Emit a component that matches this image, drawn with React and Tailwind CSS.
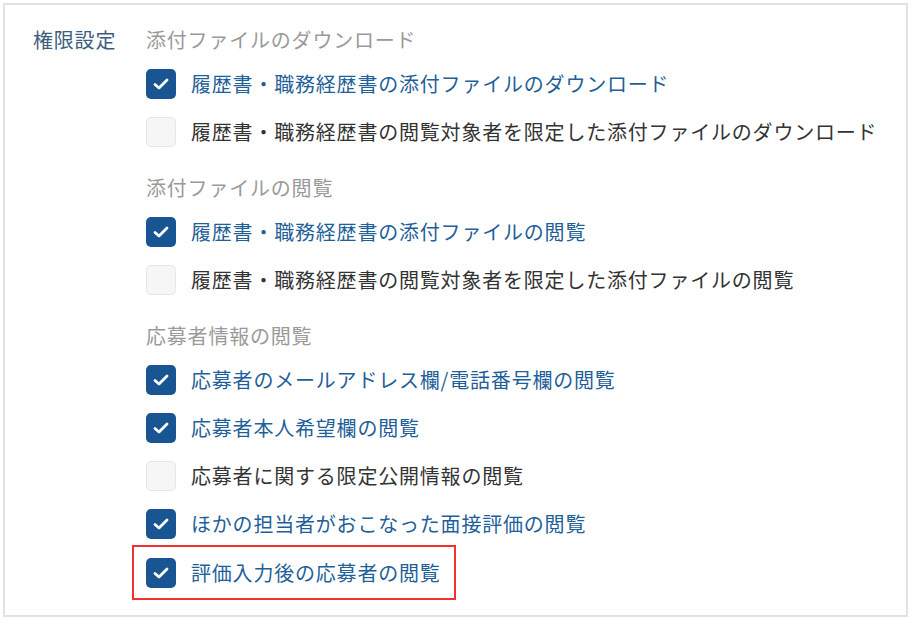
const groups = [
  {
    title: "添付ファイルのダウンロード",
    items: [
      { label: "履歴書・職務経歴書の添付ファイルのダウンロード", checked: true },
      { label: "履歴書・職務経歴書の閲覧対象者を限定した添付ファイルのダウンロード", checked: false },
    ],
  },
  {
    title: "添付ファイルの閲覧",
    items: [
      { label: "履歴書・職務経歴書の添付ファイルの閲覧", checked: true },
      { label: "履歴書・職務経歴書の閲覧対象者を限定した添付ファイルの閲覧", checked: false },
    ],
  },
  {
    title: "応募者情報の閲覧",
    items: [
      { label: "応募者のメールアドレス欄/電話番号欄の閲覧", checked: true },
      { label: "応募者本人希望欄の閲覧", checked: true },
      { label: "応募者に関する限定公開情報の閲覧", checked: false },
      { label: "ほかの担当者がおこなった面接評価の閲覧", checked: true },
      { label: "評価入力後の応募者の閲覧", checked: true, highlight: true },
    ],
  },
];

function Checkbox({ checked }) {
  if (!checked) {
    return (
      <span className="h-[30px] w-[30px] shrink-0 rounded-[5px] border border-[#e6e6e6] bg-[#f6f6f6]" />
    );
  }
  return (
    <span className="flex h-[30px] w-[30px] shrink-0 items-center justify-center rounded-[5px] bg-[#185592]">
      <svg width="16" height="12" viewBox="0 0 16 12" fill="none">
        <path
          d="M2 6.5 L6 10 L14 2"
          stroke="white"
          strokeWidth="2.8"
          strokeLinecap="round"
          strokeLinejoin="round"
        />
      </svg>
    </span>
  );
}

function Row({ item }) {
  const row = (
    <div className="flex h-[48px] items-center gap-[15px]">
      <Checkbox checked={item.checked} />
      <span className={item.checked ? "text-[#1f5f9a]" : "text-[#333333]"}>{item.label}</span>
    </div>
  );

  if (item.highlight) {
    return (
      <div className="-my-[3px] -ml-[14px] inline-flex h-[55px] items-center self-start border-2 border-[#f23030] pl-[12px] pr-[13px]">
        {row}
      </div>
    );
  }
  return row;
}

export default function App() {
  return (
    <div
      className="ml-[3px] mt-[3px] h-[614px] w-[905px] border-2 border-[#e2e2e2] bg-white pl-[28px] pt-[21px] text-[20px] leading-[28px] tracking-[0.8px]"
      style={{ fontFamily: '"Noto Sans CJK JP", "Noto Sans", sans-serif' }}
    >
      <div className="flex">
        <div className="w-[113px] shrink-0 text-[#3d5d7c]">権限設定</div>
        <div className="flex flex-col">
          {groups.map((group, i) => (
            <div key={group.title} className={i === 0 ? "flex flex-col" : "mt-[18px] flex flex-col"}>
              <div className="mb-[6px] text-[#9a9a9a]">{group.title}</div>
              {group.items.map((item) => (
                <Row key={item.label} item={item} />
              ))}
            </div>
          ))}
        </div>
      </div>
    </div>
  );
}
